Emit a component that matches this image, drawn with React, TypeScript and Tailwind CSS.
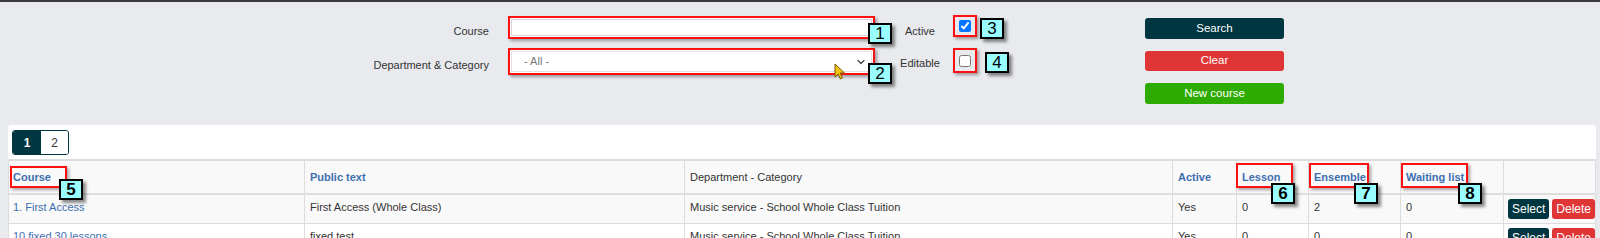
import { ChevronDown } from 'lucide-react';

const Tag = ({ n, className }: { n: number; className: string }) => (
  <div
    className={`absolute z-20 flex h-[21px] w-[24px] items-center justify-center border-2 border-black bg-[#9ff] text-[17px] leading-none text-black shadow-[3px_3px_3px_rgba(0,0,0,0.45)] ${className}`}
  >
    {n}
  </div>
);

const RedBox = ({ className }: { className: string }) => (
  <div
    className={`pointer-events-none absolute z-10 border-2 border-[#ff1010] shadow-[2px_2px_3px_rgba(0,0,0,0.35)] ${className}`}
  />
);

const rows = [
  {
    course: '1. First Access',
    publicText: 'First Access (Whole Class)',
    dept: 'Music service - School Whole Class Tuition',
    active: 'Yes',
    lesson: 0,
    ensemble: 2,
    waiting: 0,
  },
  {
    course: '10 fixed 30 lessons',
    publicText: 'fixed test',
    dept: 'Music service - School Whole Class Tuition',
    active: 'Yes',
    lesson: 0,
    ensemble: 0,
    waiting: 0,
  },
];

export default function App() {
  return (
    <div className="h-[238px] w-[1600px] overflow-hidden bg-[#e9eaee] font-[family-name:'Liberation_Sans',Arial,sans-serif] text-[11px] text-[#333]">
      <div className="h-[2px] bg-[#3a3a3a]" />

      {/* Search form */}
      <div className="relative h-[123px]">
        <div className="flex items-start pt-[14px]">
          <div className="flex w-[489px] flex-col items-end">
            <div className="flex h-[24px] items-center pt-[6px]">Course</div>
            <div className="mt-[8px] flex h-[27px] items-center pt-[8px]">Department &amp; Category</div>
          </div>

          <div className="ml-[19px] flex w-[367px] flex-col">
            <div className="h-[23px] border-2 border-[#ff1010] bg-white p-[1px] shadow-[2px_2px_3px_rgba(0,0,0,0.35)]">
              <input className="h-full w-full border border-[#d4d4d4] bg-white px-[4px] outline-none" />
            </div>
            <div className="relative mt-[9px] h-[27px] border-2 border-[#ff1010] bg-white p-[1px] shadow-[2px_2px_3px_rgba(0,0,0,0.35)]">
              <select className="h-full w-full appearance-none border border-[#e2e2e2] bg-white pl-[12px] text-[11px] text-[#777] outline-none">
                <option>- All -</option>
              </select>
              <ChevronDown className="pointer-events-none absolute right-[6px] top-[6px] h-[12px] w-[12px] text-[#444]" strokeWidth={2.5} />
            </div>
          </div>

          <div className="ml-[20px] flex w-[50px] flex-col items-center">
            <div className="flex h-[24px] items-center pt-[6px]">Active</div>
            <div className="mt-[8px] flex h-[27px] items-center pt-[3px]">Editable</div>
          </div>

          <div className="ml-[8px] flex w-[24px] flex-col">
            <div className="-mt-[1px] flex h-[22px] items-center justify-center border-2 border-[#ff1010] shadow-[2px_2px_3px_rgba(0,0,0,0.35)]">
              <input type="checkbox" defaultChecked className="h-[12px] w-[12px] accent-[#0075ff]" />
            </div>
            <div className="mt-[11px] flex h-[25px] items-center justify-center border-2 border-[#ff1010] shadow-[2px_2px_3px_rgba(0,0,0,0.35)]">
              <input type="checkbox" className="h-[12px] w-[12px]" />
            </div>
          </div>

          <div className="ml-[168px] mt-[2px] flex w-[139px] flex-col gap-[12px] text-[11.5px] text-white">
            <button className="h-[21px] rounded-[3px] bg-[#003641]">Search</button>
            <button className="h-[20px] rounded-[3px] bg-[#e03535]">Clear</button>
            <button className="h-[21px] rounded-[3px] bg-[#2eab00]">New course</button>
          </div>
        </div>

        <Tag n={1} className="left-[868px] top-[21px]" />
        <Tag n={2} className="left-[868px] top-[61px]" />
        <Tag n={3} className="left-[980px] top-[16px]" />
        <Tag n={4} className="left-[985px] top-[50px]" />

        {/* mouse pointer from the capture */}
        <svg className="absolute left-[834px] top-[61px]" width="12" height="17" viewBox="0 0 12 17">
          <path d="M1 1 L1 14 L4 11 L6.5 16 L8.5 15 L6 10 L10.5 10 Z" fill="#f4c20d" stroke="#7a5a00" strokeWidth="1" strokeLinejoin="round" />
        </svg>
      </div>

      {/* Results */}
      <div className="ml-[8px] mr-[4px] rounded-t-[3px] bg-white pt-[5px]">
        <div className="ml-[4px] inline-flex h-[25px] overflow-hidden rounded-[3px] border border-[#003641] text-[12px]">
          <span className="flex w-[28px] items-center justify-center bg-[#003641] font-bold text-white">1</span>
          <span className="flex w-[27px] items-center justify-center bg-white">2</span>
        </div>

        <table className="mt-[4px] w-full table-fixed border-collapse">
          <colgroup>
            <col className="w-[296px]" />
            <col className="w-[380px]" />
            <col className="w-[488px]" />
            <col className="w-[64px]" />
            <col className="w-[72px]" />
            <col className="w-[92px]" />
            <col className="w-[103px]" />
            <col />
          </colgroup>
          <thead>
            <tr className="h-[34px] bg-[#f9f9f9] text-left">
              <th className="relative border-x border-y-2 border-[#ddd] px-[4px] font-bold text-[#3d6fb0]">
                Course
                <RedBox className="left-[1px] top-[5px] h-[22px] w-[57px]" />
                <Tag n={5} className="left-[50px] top-[18px]" />
              </th>
              <th className="border-x border-y-2 border-[#ddd] px-[5px] font-bold text-[#3d6fb0]">Public text</th>
              <th className="border-x border-y-2 border-[#ddd] px-[5px] font-normal text-[#333]">Department - Category</th>
              <th className="border-x border-y-2 border-[#ddd] px-[5px] font-bold text-[#3d6fb0]">Active</th>
              <th className="relative border-x border-y-2 border-[#ddd] px-[5px] font-bold text-[#3d6fb0]">
                Lesson
                <RedBox className="-left-[1px] top-[2px] h-[25px] w-[57px]" />
                <Tag n={6} className="left-[34px] top-[22px]" />
              </th>
              <th className="relative border-x border-y-2 border-[#ddd] px-[5px] font-bold text-[#3d6fb0]">
                Ensemble
                <RedBox className="left-0 top-[2px] h-[25px] w-[60px]" />
                <Tag n={7} className="left-[45px] top-[22px]" />
              </th>
              <th className="relative border-x border-y-2 border-[#ddd] px-[5px] font-bold text-[#3d6fb0]">
                Waiting list
                <RedBox className="left-0 top-[2px] h-[25px] w-[67px]" />
                <Tag n={8} className="left-[57px] top-[22px]" />
              </th>
              <th className="border-x border-y-2 border-[#ddd]" />
            </tr>
          </thead>
          <tbody>
            {rows.map((r, i) => (
              <tr key={r.course} className={`h-[29px] text-[#333] ${i % 2 === 0 ? 'bg-[#f9f9f9]' : 'bg-white'}`}>
                <td className="border border-[#ddd] px-[4px] pt-[4px] align-top text-[#3d6fb0]">{r.course}</td>
                <td className="border border-[#ddd] px-[5px] pt-[4px] align-top text-[#333]">{r.publicText}</td>
                <td className="border border-[#ddd] px-[5px] pt-[4px] align-top text-[#333]">{r.dept}</td>
                <td className="border border-[#ddd] px-[5px] pt-[4px] align-top text-[#333]">{r.active}</td>
                <td className="border border-[#ddd] px-[5px] pt-[4px] align-top text-[#333]">{r.lesson}</td>
                <td className="border border-[#ddd] px-[5px] pt-[4px] align-top text-[#333]">{r.ensemble}</td>
                <td className="border border-[#ddd] px-[5px] pt-[4px] align-top text-[#333]">{r.waiting}</td>
                <td className="border border-[#ddd] px-[4px] pt-[4px] align-top">
                  <div className="flex gap-[3px] text-[12px] text-white">
                    <button className="h-[20px] rounded-[3px] bg-[#003641] px-[4px]">Select</button>
                    <button className="h-[20px] rounded-[3px] bg-[#e03535] px-[4px]">Delete</button>
                  </div>
                </td>
              </tr>
            ))}
          </tbody>
        </table>
      </div>
    </div>
  );
}
